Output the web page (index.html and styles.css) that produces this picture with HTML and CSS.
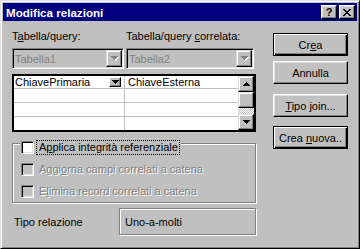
FILE: index.html
```html
<!DOCTYPE html>
<html>
  <head>
    <meta charset="utf-8">
    <link rel="stylesheet" href="styles.css">
  </head>
  <body>
    <div class="window">
      <div class="titlebar">
        <span class="title">Modifica relazioni</span>
        <span class="cap-btn help">?</span>
        <span class="cap-btn close">
          <svg width="8" height="7" shape-rendering="crispEdges"><path d="M0 0h2v1H0zM6 0h2v1H6zM1 1h2v1H1zM5 1h2v1H5zM2 2h4v1H2zM3 3h2v1H3zM2 4h4v1H2zM1 5h2v1H1zM5 5h2v1H5zM0 6h2v1H0zM6 6h2v1H6z"/></svg>
        </span>
      </div>

      <div class="client">
        <div class="left">
          <div class="pair labels">
            <div>T<u>a</u>bella/query:</div>
            <div>Tabella/query <u>c</u>orrelata:</div>
          </div>

          <div class="pair combos">
            <div class="combo">
              <span class="combo-text">Tabella1</span>
              <span class="drop">
                <svg width="8" height="5" shape-rendering="crispEdges"><path fill="#fff" d="M1 1h7v1H1zM2 2h5v1H2zM3 3h3v1H3zM4 4h1v1H4z"/><path fill="#808080" d="M0 0h7v1H0zM1 1h5v1H1zM2 2h3v1H2zM3 3h1v1H3z"/></svg>
              </span>
            </div>
            <div class="combo">
              <span class="combo-text">Tabella2</span>
              <span class="drop">
                <svg width="8" height="5" shape-rendering="crispEdges"><path fill="#fff" d="M1 1h7v1H1zM2 2h5v1H2zM3 3h3v1H3zM4 4h1v1H4z"/><path fill="#808080" d="M0 0h7v1H0zM1 1h5v1H1zM2 2h3v1H2zM3 3h1v1H3z"/></svg>
              </span>
            </div>
          </div>

          <div class="grid">
            <div class="cells">
              <div class="cell c1">
                <span class="cell-text">ChiavePrimaria</span>
                <span class="mini-drop">
                  <svg width="7" height="4" shape-rendering="crispEdges"><path d="M0 0h7v1H0zM1 1h5v1H1zM2 2h3v1H2zM3 3h1v1H3z"/></svg>
                </span>
              </div>
              <div class="cell c2">ChiaveEsterna</div>
              <div class="cell c1"></div>
              <div class="cell c2"></div>
              <div class="cell c1"></div>
              <div class="cell c2"></div>
              <div class="cell c1 last"></div>
              <div class="cell c2 last"></div>
            </div>
            <div class="vscroll">
              <div class="sb-btn">
                <svg width="7" height="4" shape-rendering="crispEdges"><path d="M3 0h1v1H3zM2 1h3v1H2zM1 2h5v1H1zM0 3h7v1H0z"/></svg>
              </div>
              <div class="sb-thumb"></div>
              <div class="sb-track"></div>
              <div class="sb-btn">
                <svg width="7" height="4" shape-rendering="crispEdges"><path d="M0 0h7v1H0zM1 1h5v1H1zM2 2h3v1H2zM3 3h1v1H3z"/></svg>
              </div>
            </div>
          </div>

          <div class="group">
            <div class="check-row group-title">
              <span class="checkbox"></span>
              <span class="focus">A<u>p</u>plica integrità referenziale</span>
            </div>
            <div class="check-row disabled">
              <span class="checkbox"></span>
              <span class="check-label">Aggi<u>o</u>rna campi correlati a catena</span>
            </div>
            <div class="check-row disabled">
              <span class="checkbox"></span>
              <span class="check-label">E<u>l</u>imina record correlati a catena</span>
            </div>
          </div>

          <div class="relation">
            <span class="rel-label">Tipo relazione</span>
            <div class="rel-box">Uno-a-molti</div>
          </div>
        </div>

        <div class="buttons">
          <div class="btn default first"><span>Cr<u>e</u>a</span></div>
          <div class="btn cancel"><span>Annulla</span></div>
          <div class="btn join"><span><u>T</u>ipo join...</span></div>
          <div class="btn default newone"><span>Crea <u>n</u>uova..</span></div>
        </div>
      </div>
    </div>
  </body>
</html>
```

FILE: styles.css
```css
body {
  margin: 0;
  font-family: "Liberation Sans", Arial, sans-serif;
  font-size: 11px;
  color: #000;
}

.window {
  width: 360px;
  height: 249px;
  box-sizing: border-box;
  background: #c0c0c0;
  border: 1px solid;
  border-color: #dfdfdf #000 #000 #dfdfdf;
  box-shadow: inset 1px 1px #fff, inset -1px -1px #808080;
  padding: 2px;
  display: flex;
  flex-direction: column;
}

/* caption */
.titlebar {
  height: 18px;
  background: #000080;
  color: #fff;
  display: flex;
  align-items: center;
  padding-left: 3px;
}
.title {
  flex: 1;
  font-weight: bold;
  font-size: 11.6px;
}
.cap-btn {
  width: 16px;
  height: 14px;
  box-sizing: border-box;
  background: #c0c0c0;
  color: #000;
  border: 1px solid;
  border-color: #fff #000 #000 #fff;
  box-shadow: inset -1px -1px #808080, inset 1px 1px #dfdfdf;
  display: flex;
  align-items: center;
  justify-content: center;
  margin-right: 2px;
}
.cap-btn.help {
  font-weight: bold;
  line-height: 12px;
}

/* dialog body */
.client {
  display: flex;
  gap: 17px;
  padding: 9px 9px 0 9px;
}
.left {
  width: 244px;
  display: flex;
  flex-direction: column;
}
.pair {
  display: grid;
  grid-template-columns: 112px 128px;
  column-gap: 2px;
}
.labels {
  line-height: 13px;
}
.combos {
  margin-top: 5px;
}
.combo {
  height: 21px;
  box-sizing: border-box;
  border: 1px solid;
  border-color: #808080 #fff #fff #808080;
  box-shadow: inset 1px 1px #000, inset -1px -1px #dfdfdf;
  padding: 1px;
  display: flex;
  align-items: center;
}
.combo-text {
  flex: 1;
  color: #808080;
  padding-left: 1px;
}
.drop {
  width: 16px;
  height: 17px;
  box-sizing: border-box;
  border: 1px solid;
  border-color: #dfdfdf #000 #000 #dfdfdf;
  box-shadow: inset -1px -1px #808080, inset 1px 1px #fff;
  display: flex;
  align-items: center;
  justify-content: center;
}
.drop svg {
  margin-left: 1px;
}

/* field grid */
.grid {
  margin-top: 5px;
  height: 58px;
  box-sizing: border-box;
  border: 2px solid #000;
  display: flex;
  background: #fff;
}
.cells {
  flex: 1;
  display: grid;
  grid-template-columns: 111px 1fr;
  grid-template-rows: 13px 14px 14px 1fr;
  font-size: 11px;
}
.cell {
  box-sizing: border-box;
  border-bottom: 1px solid #c0c0c0;
  display: flex;
  align-items: center;
  line-height: 12px;
}
.cell.last {
  border-bottom: 0;
}
.c1 {
  border-right: 1px solid #c0c0c0;
  padding-left: 1px;
}
.c2 {
  padding-left: 3px;
}
.cell-text {
  flex: 1;
}
.mini-drop {
  width: 12px;
  height: 10px;
  box-sizing: border-box;
  background: #c0c0c0;
  border: 1px solid;
  border-color: #fff #000 #000 #fff;
  box-shadow: inset -1px -1px #808080;
  display: flex;
  align-items: center;
  justify-content: center;
  margin-right: 3px;
}
.vscroll {
  width: 16px;
  display: flex;
  flex-direction: column;
}
.sb-btn,
.sb-thumb {
  height: 16px;
  box-sizing: border-box;
  background: #c0c0c0;
  border: 1px solid;
  border-color: #dfdfdf #000 #000 #dfdfdf;
  box-shadow: inset -1px -1px #808080, inset 1px 1px #fff;
  display: flex;
  align-items: center;
  justify-content: center;
}
.sb-track {
  flex: 1;
  background: repeating-conic-gradient(#fff 0 25%, #c0c0c0 0 50%) 0 0 / 2px 2px;
}

/* referential integrity group */
.group {
  margin-top: 11px;
  height: 60px;
  box-sizing: border-box;
  border: 1px solid #808080;
  box-shadow: inset 1px 1px #fff, 1px 1px #fff;
  padding-left: 7px;
  display: flex;
  flex-direction: column;
  gap: 9px;
}
.check-row {
  display: flex;
  align-items: center;
  height: 13px;
  line-height: 13px;
}
.group-title {
  margin-top: -3px;
  align-self: flex-start;
  background: #c0c0c0;
  padding: 0 2px 0 1px;
}
.checkbox {
  width: 13px;
  height: 13px;
  box-sizing: border-box;
  background: #fff;
  border: 1px solid;
  border-color: #808080 #fff #fff #808080;
  box-shadow: inset 1px 1px #000, inset -1px -1px #dfdfdf;
}
.focus {
  margin-left: 3px;
  padding: 0 1px 0 2px;
  outline: 1px dotted #000;
}
.check-row.disabled {
  padding-left: 1px;
}
.disabled .checkbox {
  background: #c0c0c0;
}
.check-label {
  margin-left: 5px;
  color: #808080;
  text-shadow: 1px 1px 0 #fff;
}

/* relation type */
.relation {
  margin-top: 5px;
  display: grid;
  grid-template-columns: 107px 137px;
  align-items: center;
}
.rel-label {
  padding-left: 2px;
}
.rel-box {
  height: 27px;
  box-sizing: border-box;
  border: 1px solid #808080;
  box-shadow: inset 1px 1px #fff, 1px 1px #fff;
  padding-left: 5px;
  display: flex;
  align-items: center;
}

/* command buttons */
.buttons {
  width: 75px;
  display: flex;
  flex-direction: column;
}
.btn {
  height: 23px;
  box-sizing: border-box;
  background: #c0c0c0;
  border: 1px solid;
  border-color: #fff #000 #000 #fff;
  box-shadow: inset -1px -1px #808080, inset 1px 1px #dfdfdf;
  display: flex;
  align-items: center;
  justify-content: center;
}
.btn.default {
  border-color: #000;
  box-shadow: inset 1px 1px #fff, inset -1px -1px #000, inset -2px -2px #808080;
}
.btn.first {
  margin-top: 3px;
}
.btn.cancel {
  margin-top: 5px;
}
.btn.join {
  margin-top: 10px;
}
.btn.newone {
  margin-top: 9px;
}
```
